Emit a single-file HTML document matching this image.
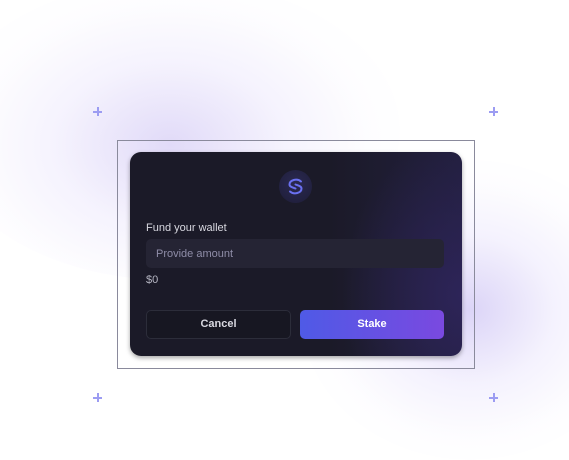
<!DOCTYPE html>
<html><head><meta charset="utf-8"><style>
*{margin:0;padding:0;box-sizing:border-box}
body{width:569px;height:421px;overflow:hidden;position:relative;background:#fff;font-family:"Liberation Sans",sans-serif}
.glow1{position:absolute;left:-60px;top:-20px;width:460px;height:300px;border-radius:50%;background:radial-gradient(ellipse at 50% 55%,rgba(200,188,242,.55),rgba(222,214,250,.3) 35%,rgba(240,236,253,.12) 60%,rgba(255,255,255,0) 75%)}
.glow2{position:absolute;left:300px;top:160px;width:340px;height:300px;border-radius:50%;background:radial-gradient(ellipse at 50% 50%,rgba(196,184,242,.6),rgba(220,212,250,.3) 35%,rgba(240,236,253,.12) 60%,rgba(255,255,255,0) 75%)}
.frame{position:absolute;left:117px;top:140px;width:358px;height:229px;border:1px solid #8a8a9c}
.card{position:absolute;left:130px;top:152px;width:332px;height:204px;border-radius:11px;background:radial-gradient(ellipse 120px 160px at 100% 70%,#2d2458,rgba(28,27,45,0) 100%),linear-gradient(90deg,#1b1a28 60%,#221f3e);box-shadow:0 2px 5px rgba(0,0,0,.35)}
.logo{position:absolute;left:279px;top:170px;width:33px;height:33px;border-radius:50%;background:radial-gradient(circle at 50% 40%,#2a2950,#1e1d38)}
.t{position:absolute;color:#d8d8e0;font-size:11px}
.input{position:absolute;left:146px;top:239px;width:298px;height:29px;border-radius:5px;background:#252434}
.btn{position:absolute;top:310px;height:29px;border-radius:5px;font-size:11px;font-weight:bold;text-align:center;line-height:29px}
.sp{position:absolute;width:9px;height:9px}
.sp:before,.sp:after{content:"";position:absolute;background:#9c9cf2}
.sp:before{left:4px;top:0;width:1.5px;height:9px}
.sp:after{top:4px;left:0;height:1.5px;width:9px}
</style></head><body>
<div class="glow1"></div><div class="glow2"></div>
<div class="sp" style="left:93px;top:107px"></div>
<div class="sp" style="left:489px;top:107px"></div>
<div class="sp" style="left:93px;top:393px"></div>
<div class="sp" style="left:489px;top:393px"></div>
<div class="frame"></div>
<div class="card"></div>
<div class="logo"><svg width="33" height="33" viewBox="0 0 33 33"><g fill="none" stroke="#6a70f0" stroke-width="2" stroke-linecap="round"><path d="M22 11.5 C18 8 10.5 10 10.5 14.5 C10.5 17 14 17.5 16.5 18.5"/><path d="M11 21.5 C15 25 22.5 23 22.5 18.5 C22.5 16 19 15.5 16.5 14.5"/></g></svg></div>
<div class="t" style="left:146px;top:222px">Fund your wallet</div>
<div class="input"></div>
<div class="t" style="left:156px;top:248px;color:#8f8da8">Provide amount</div>
<div class="t" style="left:146px;top:274px;color:#b5b5c2">$0</div>
<div class="btn" style="left:146px;width:145px;border:1px solid #2c2d3a;background:#171722;color:#d8d8e0;line-height:27px">Cancel</div>
<div class="btn" style="left:300px;width:144px;background:linear-gradient(90deg,#4f5ae6,#7a49e0);color:#fff">Stake</div>
</body></html>
